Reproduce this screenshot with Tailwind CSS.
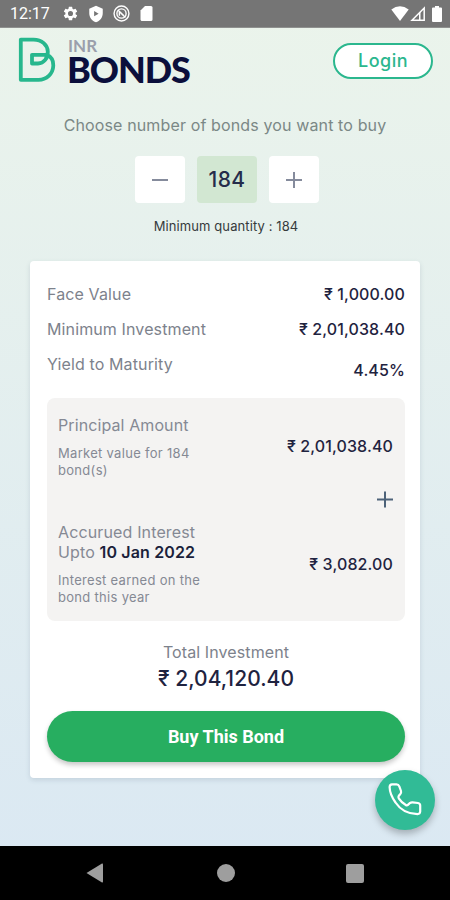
<!DOCTYPE html>
<html lang="en">
<head>
    <meta charset="UTF-8">
    <meta name="viewport" content="width=device-width, initial-scale=1.0">
    <title>INR Bonds</title>
    <script src="https://cdn.jsdelivr.net/npm/@tailwindcss/browser@4"></script>
</head>
<body class="font-['Inter','Noto_Sans',sans-serif] text-[#1f2340]">

    <div class="relative flex flex-col w-[450px] h-[900px] overflow-hidden bg-linear-to-b from-[#ebf4eb] to-[#dae8f3]">

        <!-- Status bar -->
        <div class="flex items-center h-7 shrink-0 bg-[#757575] pl-[10px] pr-2 text-white border-b border-[#8f918f]">
            <span class="font-[Roboto,sans-serif] text-[16px] w-[53px] leading-7 whitespace-nowrap">12:17</span>
            <svg class="w-[17px] h-[17px] -ml-[1px] mr-2" viewBox="0 0 24 24" fill="currentColor"><path d="M19.14 12.94c.04-.3.06-.61.06-.94 0-.32-.02-.64-.07-.94l2.03-1.58a.49.49 0 0 0 .12-.61l-1.92-3.32a.49.49 0 0 0-.59-.22l-2.39.96c-.5-.38-1.03-.7-1.62-.94l-.36-2.54a.48.48 0 0 0-.48-.41h-3.84c-.24 0-.43.17-.47.41l-.36 2.54c-.59.24-1.13.57-1.62.94l-2.39-.96c-.22-.08-.47 0-.59.22L2.74 8.87c-.12.21-.08.47.12.61l2.03 1.58c-.05.3-.09.63-.09.94s.02.64.07.94l-2.03 1.58a.49.49 0 0 0-.12.61l1.92 3.32c.12.22.37.29.59.22l2.39-.96c.5.38 1.03.7 1.62.94l.36 2.54c.05.24.24.41.48.41h3.84c.24 0 .44-.17.47-.41l.36-2.54c.59-.24 1.13-.56 1.62-.94l2.39.96c.22.08.47 0 .59-.22l1.92-3.32c.12-.22.07-.47-.12-.61l-2.01-1.58zM12 15.6A3.6 3.6 0 1 1 12 8.4a3.6 3.6 0 0 1 0 7.2z"/></svg>
            <svg class="w-[18px] h-[18px] mr-2" viewBox="0 0 24 24" fill="currentColor" fill-rule="evenodd"><path d="M12 1 3 5v6c0 5.550 3.840 10.740 9 12 5.160-1.260 9-6.450 9-12V5l-9-4zM9.500 8v7l6-3.500z"/></svg>
            <svg class="w-[17px] h-[17px] mr-[10px]" viewBox="0 0 24 24" fill="none" stroke="currentColor" stroke-width="2"><circle cx="12" cy="12" r="10.500"/><circle cx="12" cy="12" r="6.500"/><path d="m7 7 10.500 10.500M9 15V9l6 6"/></svg>
            <svg class="w-[13px] h-[15px]" viewBox="0 0 16 20" fill="currentColor" fill-rule="evenodd"><path d="M14 0H6L0 6v12c0 1.100.9 2 2 2h12a2 2 0 0 0 2-2V2a2 2 0 0 0-2-2z"/></svg>
            <svg class="w-[18px] h-[15px] ml-auto" viewBox="0 0 18 15" fill="currentColor"><path d="M9 15 .3 3.600Q9-3 17.700 3.600z"/></svg>
            <svg class="w-[15px] h-[15px] ml-[1px] mr-[7px]" viewBox="0 0 15 15"><path d="M2 14.200 14.200 2v12.200z" fill="none" stroke="currentColor" stroke-width="1.500"/><path d="M9 14V7l1.500-1.500V14z" fill="currentColor"/></svg>
            <svg class="w-[10px] h-[16px]" viewBox="0 0 10 16" fill="currentColor"><path d="M3 0h4v1.600h2q1 0 1 1V15q0 1-1 1H1q-1 0-1-1V2.600q0-1 1-1h2z"/></svg>
        </div>

        <!-- Header -->
        <header class="flex h-[66px] shrink-0 pl-[18px] pr-[17px]">
            <svg class="w-[38px] h-[46px] mt-[9px]" viewBox="0 0 38 46" fill="none" stroke="#27b78d" stroke-width="3.800" stroke-linejoin="round"><path d="M28.500 17.500C34 20 35.500 24.500 35.300 28.500C35 37 28.500 42.800 20.500 42.800H2.800V2.600H15.500C24 2.600 29.500 8 29.800 14.500C30 21 26 26.500 20 26.500H14V17.800H28.500"/></svg>
            <div class="flex flex-col ml-3 mt-[9px] w-[130px] font-[Lato,sans-serif] whitespace-nowrap">
                <span class="text-[17px] leading-[17px] font-bold text-[#9b9fab]">INR</span>
                <span class="-ml-px mt-px text-[36px] leading-[29px] font-black tracking-[-1.1px] text-[#0b0f3c]">BONDS</span>
            </div>
            <button class="ml-auto mt-[14.500px] w-[100px] h-9 rounded-full border-2 border-[#2bb78e] bg-white text-[#2bb78e] text-[18px] font-medium tracking-[0.5px]">Login</button>
        </header>

        <!-- Quantity picker -->
        <section class="flex flex-col items-center">
            <p class="mt-[19px] leading-6 text-[16px] tracking-[0.13px] text-[#7b8886] whitespace-nowrap">Choose number of bonds you want to buy</p>
            <div class="flex gap-3 mt-[19px] h-[47px] ml-1">
                <button class="flex items-center justify-center w-[50px] rounded bg-white">
                    <svg class="w-4 h-4" viewBox="0 0 16 16" stroke="#858b9c" stroke-width="2"><path d="M0 8h16"/></svg>
                </button>
                <div class="flex items-center justify-center w-[60px] rounded bg-[#d2e7d2] text-[21px] font-medium tracking-[0.4px] text-[#252c4b]">184</div>
                <button class="flex items-center justify-center w-[50px] rounded bg-white">
                    <svg class="w-4 h-4" viewBox="0 0 16 16" stroke="#858b9c" stroke-width="2"><path d="M0 8h16M8 0v16"/></svg>
                </button>
            </div>
            <p class="mt-[13px] ml-0.5 leading-5 text-[13px] tracking-[0.1px] text-[#363b3c] whitespace-nowrap">Minimum quantity : 184</p>
        </section>

        <!-- Bond details card -->
        <main class="flex flex-col mx-[30px] mt-[25px] h-[517px] shrink-0 pl-[17px] pr-[15px] pt-[16px] rounded bg-white shadow-[0_2px_5px_rgba(60,90,110,0.16)]">
            <div class="flex justify-between h-[35px] leading-[35px] text-[16px] tracking-[0.12px]">
                <span class="text-[#7d828c]">Face Value</span>
                <span class="font-medium">₹ 1,000.00</span>
            </div>
            <div class="flex justify-between h-[35px] leading-[35px] text-[16px] tracking-[0.12px]">
                <span class="text-[#7d828c]">Minimum Investment</span>
                <span class="font-medium">₹ 2,01,038.40</span>
            </div>
            <div class="flex justify-between h-[35px] leading-[35px] text-[16px] tracking-[0.12px]">
                <span class="text-[#7d828c]">Yield to Maturity</span>
                <span class="font-medium pt-[6px]">4.45%</span>
            </div>

            <div class="flex flex-col mt-4 h-[223px] pl-[11px] pr-3 rounded-lg bg-[#f4f3f2]">
                <div class="flex justify-between mt-[17px]">
                    <div class="whitespace-nowrap text-[#858994]">
                        <p class="text-[16px] leading-5 tracking-[0.1px]">Principal Amount</p>
                        <p class="mt-[10px] text-[13px] leading-[16.500px] tracking-[0.3px]">Market value for 184<br>bond(s)</p>
                    </div>
                    <span class="mt-[21px] text-[16px] leading-5 font-medium tracking-[0.12px]">₹ 2,01,038.40</span>
                </div>
                <svg class="w-4 h-[17px] mt-[13px] ml-auto" viewBox="0 0 16 17" stroke="#4d6279" stroke-width="2"><path d="M0 8.500h16M8 .5v16"/></svg>
                <div class="flex justify-between mt-[15px]">
                    <div class="whitespace-nowrap text-[#858994]">
                        <p class="text-[16px] leading-[19.500px] tracking-[0.14px]">Accurued Interest<br>Upto <span class="font-semibold text-[#1b1f3b]">10 Jan 2022</span></p>
                        <p class="mt-[10px] text-[13px] leading-[16.500px] tracking-[0.3px]">Interest earned on the<br>bond this year</p>
                    </div>
                    <span class="mt-[31px] text-[16px] leading-5 font-medium tracking-[0.12px]">₹ 3,082.00</span>
                </div>
            </div>

            <div class="flex flex-col items-center mt-[19px] whitespace-nowrap">
                <span class="text-[16px] leading-6 tracking-[0.1px] text-[#7d828c]">Total Investment</span>
                <span class="mt-px text-[21px] leading-7 font-medium tracking-[0.05px]">₹ 2,04,120.40</span>
            </div>

            <button class="mt-[18px] h-[51px] shrink-0 rounded-full bg-[#27ae60] font-[Roboto,sans-serif] text-[18px] font-bold text-white shadow-[0_3px_5px_rgba(0,0,0,0.22)]">Buy This Bond</button>
        </main>

        <!-- Call button, floats over the card corner -->
        <button class="absolute left-[375px] top-[770px] flex items-center justify-center w-[60px] h-[60px] rounded-full bg-[#31bb96] shadow-[0_4px_7px_rgba(0,0,0,0.25)]">
            <svg class="w-9 h-9" viewBox="0 0 36 36" fill="none" stroke="#fff" stroke-width="2.200" stroke-linejoin="round"><path d="M5 2.300H9.500Q11.500 2.300 12.300 4.300L14 9Q14.500 10.800 13.200 12.200L11.800 13.800Q11 15 11.800 16.300Q14.500 20.500 18.800 23Q20 23.800 21.200 22.600L22.800 21.200Q24 20.200 25.500 20.300L31 21Q33.200 21.500 33.200 23.500V29.500Q33 32 30.500 32.200C22 32 13.500 28 8.500 20.500C5 15.500 2.700 10 2.600 5Q2.700 2.500 5 2.300z"/></svg>
        </button>

        <!-- Android navigation -->
        <nav class="flex items-center mt-auto h-[54px] shrink-0 bg-black text-[#9e9e9e]">
            <svg class="w-[17px] h-5 ml-[86px]" viewBox="0 0 17 20" fill="currentColor"><path d="M.5 10 16 .6q1-.3 1 .8v17.200q0 1.100-1 .8z"/></svg>
            <span class="w-[18px] h-[18px] ml-[114px] rounded-full bg-[#9e9e9e]"></span>
            <span class="w-[18px] h-[19px] ml-[111px] rounded-[2px] bg-[#9e9e9e]"></span>
        </nav>
    </div>

</body>
</html>
